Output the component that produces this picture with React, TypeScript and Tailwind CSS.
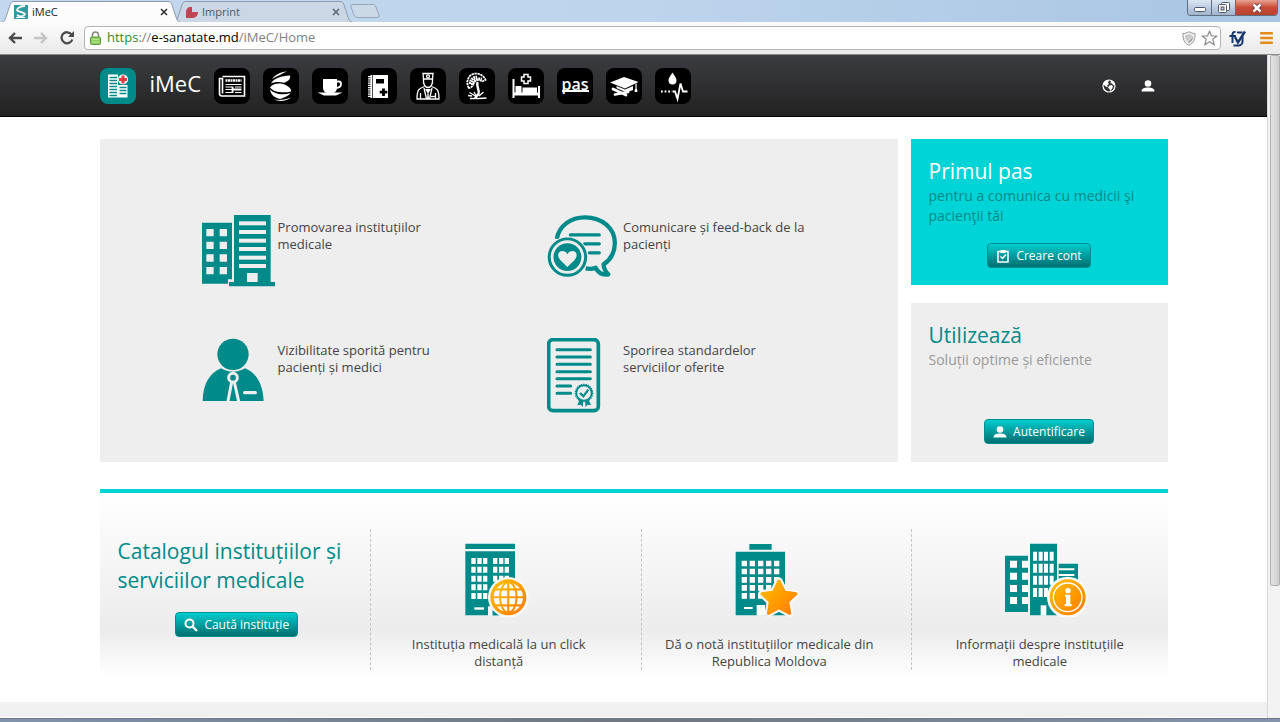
import React from "react";
import clsx from "clsx";

interface IconProps {
  className?: string;
}

/* ---------- browser window ---------- */

const TabEdge: React.FC<{ side: "left" | "right"; active: boolean }> = ({ side, active }) => (
  <svg
    viewBox="0 0 12 21"
    className={clsx("h-[21px] w-3 shrink-0", side === "right" && "-scale-x-100")}
    aria-hidden="true"
  >
    <path d="M0 21C3 20 3 19 4 16L8 4C9 1 10 .5 12 .5V21Z" fill={active ? "#fcfcfd" : "#ccd7e5"} />
    <path d="M0 21C3 20 3 19 4 16L8 4C9 1 10 .5 12 .5" fill="none" stroke="#8f9cad" />
  </svg>
);

interface TabProps {
  title: string;
  active?: boolean;
  icon: React.ReactNode;
}

const BrowserTab: React.FC<TabProps> = ({ title, active = false, icon }) => (
  <div className={clsx("flex items-end", active ? "z-10" : "-ml-1.5")}>
    <TabEdge side="left" active={active} />
    <div
      className={clsx(
        "flex h-[21px] w-[154px] items-center border-t border-[#8f9cad] text-[11px]",
        active ? "bg-[#fcfcfd] text-[#222]" : "bg-[#ccd7e5] text-[#4d5766]",
      )}
    >
      {icon}
      <span className="ml-1 flex-1">{title}</span>
      <button type="button" aria-label={`Close ${title}`}>
        <svg viewBox="0 0 8 8" className="h-2 w-2" stroke={active ? "#333" : "#5d6673"} strokeWidth="1.6">
          <path d="M1 1L7 7M7 1L1 7" />
        </svg>
      </button>
    </div>
    <TabEdge side="right" active={active} />
  </div>
);

const WindowControls = () => (
  <div className="mr-0.5 ml-auto flex h-4 self-start overflow-hidden rounded-b border border-t-0 border-[#5f6e80]">
    <button
      type="button"
      aria-label="Minimize"
      className="flex w-6 items-center justify-center border-r border-[#5f6e80] bg-linear-to-b from-[#dbe6f2] to-[#9fb4cb]"
    >
      <svg viewBox="0 0 12 10" className="h-2.5 w-3">
        <rect x=".5" y="4.5" width="11" height="4" rx="1" fill="#fff" stroke="#4d5868" />
      </svg>
    </button>
    <button
      type="button"
      aria-label="Restore"
      className="flex w-6 items-center justify-center border-r border-[#5f6e80] bg-linear-to-b from-[#dbe6f2] to-[#9fb4cb]"
    >
      <svg viewBox="0 0 12 12" className="h-3 w-3" fill="#fff" stroke="#4d5868">
        <rect x="3.5" y=".5" width="8" height="8" rx="1" />
        <rect x=".5" y="2.5" width="8" height="8" rx="1" />
        <rect x="3" y="5" width="3" height="3" fill="#b9c9da" />
      </svg>
    </button>
    <button
      type="button"
      aria-label="Close window"
      className="flex w-[41px] items-center justify-center bg-linear-to-b from-[#e5a294] via-[#c94a35] to-[#b5432f]"
    >
      <svg viewBox="0 0 12 10" className="h-2.5 w-3" fill="none">
        <path d="M2.5 1.5L9.5 8.5M9.5 1.5L2.5 8.5" stroke="#5c3a3a" strokeWidth="4.4" />
        <path d="M2.5 1.5L9.5 8.5M9.5 1.5L2.5 8.5" stroke="#fff" strokeWidth="2.6" />
      </svg>
    </button>
  </div>
);

const TabStrip = () => (
  <div className="flex h-[22px] items-end bg-linear-to-r from-[#c3d8ee] via-[#bdd4ec] to-[#a9c5e3] pl-0.5">
    <BrowserTab
      title="iMeC"
      active
      icon={
        <svg viewBox="0 0 14 14" className="h-3.5 w-3.5">
          <rect width="14" height="14" fill="#2f9aa0" />
          <path d="M11 1C7 1 3 3 3 5s6 1 8 4c-1 3-5 3-8 1" fill="none" stroke="#fff" strokeWidth="1.8" />
          <path d="M2 12.5h9" stroke="#fff" />
        </svg>
      }
    />
    <BrowserTab
      title="Imprint"
      icon={
        <svg viewBox="0 0 12 12" className="h-3 w-3" fill="#c04551">
          <path d="M4 1h2v5h6c0 4-3 6-6 6H0V6C0 3 2 1 4 1Z" />
        </svg>
      }
    />
    <button type="button" aria-label="New tab" className="mb-1 -ml-0.5">
      <svg viewBox="0 0 30 14" className="h-3.5 w-[30px]">
        <path
          d="M2 .5H22C24 .5 25 1 26 3L29 11C29.5 13 29 13.5 27 13.5H8C6 13.5 5 13 4 11L1 3C.5 1 1 .5 2 .5Z"
          fill="#cbd8e6"
          stroke="#98a7b9"
        />
      </svg>
    </button>
    <WindowControls />
  </div>
);

const Toolbar = () => (
  <div className="flex h-[33px] items-center border-b border-[#8a8a8a] bg-linear-to-b from-[#fcfcfd] to-[#e9e9ea] pr-[7px] pl-2">
    <button type="button" aria-label="Back">
      <svg viewBox="0 0 14 12" className="h-3 w-3.5" fill="none" stroke="#4a4a4a" strokeWidth="2.4">
        <path d="M14 6H2M7 1L2 6L7 11" />
      </svg>
    </button>
    <button type="button" aria-label="Forward" className="ml-3">
      <svg viewBox="0 0 14 12" className="h-3 w-3.5" fill="none" stroke="#c4c4c4" strokeWidth="2.4">
        <path d="M0 6H12M7 1L12 6L7 11" />
      </svg>
    </button>
    <button type="button" aria-label="Reload" className="ml-3">
      <svg viewBox="0 0 14 14" className="h-3.5 w-3.5">
        <path d="M11.5 3.5A5.5 5.5 0 1 0 12.300 8.500" fill="none" stroke="#4a4a4a" strokeWidth="2.3" />
        <path d="M14 0V6H8Z" fill="#4a4a4a" />
      </svg>
    </button>

    <div className="ml-2.5 flex h-6 flex-1 items-center rounded-sm border border-[#b4b4b4] bg-white pr-0.5 pl-[5px]">
      <svg viewBox="0 0 11 14" className="h-3.5 w-[11px] shrink-0">
        <path d="M2.5 7V4a3 3 0 0 1 6 0V7" fill="none" stroke="#888" strokeWidth="1.6" />
        <rect x=".5" y="6" width="10" height="7.5" rx="1" fill="#8fcf5f" stroke="#5f9a3f" />
        <path d="M2 8.5h7M2 11h7" stroke="#b5e493" />
      </svg>
      <div role="textbox" aria-label="Address" tabIndex={0} className="ml-1.5 flex-1 text-[13px] text-[#808080]">
        <span className="text-[#2a8f2a]">https</span>://
        <span className="text-black">e-sanatate.md</span>/iMeC/Home
      </div>
      <svg viewBox="0 0 14 15" className="h-[15px] w-3.5">
        <path d="M7 .7C5 2 3 2.5 1 2.5C.8 8 2 12 7 14.300C12 12 13.200 8 13 2.5C11 2.5 9 2 7 .7Z" fill="#f3f3f3" stroke="#969696" />
        <path d="M7 3C6 3.600 4.500 4.200 3 4.300C3 7 3.500 9 5 10.500L11 4.300C9.500 4.200 8 3.600 7 3Z" fill="#c8c8c8" />
        <path d="M5.500 11L11.200 5C11 8.500 10 11 7 12.300Z" fill="#aaa" />
      </svg>
      <button type="button" aria-label="Bookmark" className="ml-[5px]">
        <svg viewBox="0 0 17 16" className="h-4 w-[17px]">
          <path
            d="M8.5 1L10.5 6H16L11.700 9.300L13.300 15L8.500 11.700L3.700 15L5.300 9.300L1 6H6.500Z"
            fill="#fdfdfd"
            stroke="#8d8d8d"
            strokeWidth="1.2"
            strokeLinejoin="round"
          />
        </svg>
      </button>
    </div>

    <button type="button" aria-label="Extension" className="ml-2">
      <svg viewBox="0 0 17 17" className="h-[17px] w-[17px]" fill="none" stroke="#17376f" strokeWidth="2">
        <path d="M6.5 2C4 1.5 3.5 3 3.5 5V13M.5 6H7" />
        <path d="M6 7L9 12.500L16 1.500" strokeWidth="2.4" />
        <path d="M8 2.500H13.500M13.500 6V12C13.500 15 11 16 4.500 15.500" />
      </svg>
    </button>
    <button type="button" aria-label="Menu" className="ml-3.5">
      <svg viewBox="0 0 13 12" className="h-3 w-[13px]" fill="#e58a14">
        <rect width="13" height="2.6" rx="1" />
        <rect y="4.7" width="13" height="2.6" rx="1" />
        <rect y="9.4" width="13" height="2.6" rx="1" />
      </svg>
    </button>
  </div>
);

/* ---------- header icons, 36x36 tiles ---------- */

const Tile: React.FC<{ label: string; children: React.ReactNode }> = ({ label, children }) => (
  <a href="#" aria-label={label} className="flex h-9 w-9 items-center justify-center rounded-lg bg-black">
    {children}
  </a>
);

const NewsIcon = () => (
  <svg viewBox="0 0 36 36" fill="none" stroke="#fff">
    <path d="M8.5 8.5H30.5V28H8Q5.5 28 5.5 25.5V10.5H8.5V25.5" strokeWidth="1.6" />
    <path d="M11.5 12.5H27.5" strokeWidth="2.4" strokeDasharray="2 .5" />
    <path d="M11.5 16.5H27.5M11.5 19H18M11.5 21.5H18M11.5 24.5H18M21 19H27.5M21 24.5H27.5" strokeWidth="1.2" />
    <path d="M18.5 18.5V25M19 21.5H27.5" strokeWidth="1.8" />
  </svg>
);

const ShellIcon = () => (
  <svg viewBox="0 0 36 36" fill="#fff">
    <path d="M9 11C12 7 17 4 24 3.5C19 5.500 15 8 9 11Z" />
    <path d="M8 15.500C11 10 18 8 27 7.500C28 11 25 13.500 21 14.800C16 13.500 11 14 8 15.500Z" />
    <path d="M7 19.500C10 15 18 14.500 23.500 17.500C27 19.500 28.500 21.500 28 23.500C20 25.500 10 24 7 19.500Z" />
    <path d="M7 21.500C11 26 20 27.500 27.500 25C25 28.500 21 29.500 17 31C12 30 8 27 7 21.500Z" />
    <path d="M11 31.500C17 32.500 23 31.500 28 29.500C24 33 16 34 11 31.500Z" />
  </svg>
);

const CupIcon = () => (
  <svg viewBox="0 0 36 36">
    <path d="M11 11H25V19C25 23 23 25 20 25H16C13 25 11 23 11 19Z" fill="#fff" />
    <path d="M25 13.5H27Q29 13.5 29 16Q29 19.500 24.500 20" fill="none" stroke="#fff" strokeWidth="1.8" />
    <path d="M5.500 24.500H30.500L24 27.500H12Z" fill="#fff" />
  </svg>
);

const NotebookIcon = () => (
  <svg viewBox="0 0 36 36">
    <rect x="9.5" y="7" width="17.5" height="23" fill="#fff" />
    <path d="M8.5 8V29.5" stroke="#fff" strokeWidth="3" strokeDasharray="1.2 1" />
    <path d="M11.5 7V30" stroke="#000" strokeWidth=".7" />
    <rect x="15" y="11" width="8" height="4.5" />
    <path d="M22.5 20.5V28M18.7 24.2H26.3" stroke="#000" strokeWidth="2.8" />
  </svg>
);

const DoctorIcon = () => (
  <svg viewBox="0 0 36 36" fill="none" stroke="#fff" strokeWidth="1.3">
    <path d="M13 5.5H23L22.5 11H13.5Z" />
    <circle cx="18" cy="8.3" r="1.5" />
    <path d="M13.5 11C13 16 15 19.5 18 19.5S23 16 22.5 11" />
    <path d="M14.5 18.5C9 20.5 7 21.5 7 31H29C29 21.5 27 20.5 21.5 18.5" />
    <path d="M14 20L16.5 31M22 20L19.5 31M10.5 25V31M25.5 25V31" />
    <path d="M15 21H21L18.5 25L19 31H17L17.5 25Z" fill="#fff" stroke="none" />
    <path d="M21 28.5H25" />
  </svg>
);

const TreeIcon = () => (
  <svg viewBox="0 0 36 36" fill="none" stroke="#fff">
    <path d="M10 20C7 16 8 9 13 6.5C18 4 25 7 26.5 12L23 13.5C20 11 16 12 15 15C14 18 12 20 10 20Z" strokeWidth="1.8" strokeDasharray="2.4 .6" />
    <path d="M11 16C11 12 14 9 18 9M13 17C14 12 17 10 23 11" strokeWidth="2.6" strokeDasharray="1.8 .6" />
    <path d="M18.5 14C17 20 21 21 19.5 26L16 30" strokeWidth="2.4" />
    <path d="M10.5 24.5L18 29L15 24M20 28L24.5 24M11 30.5H20L27.5 30M13 28L9 27.5" strokeWidth="1.3" />
  </svg>
);

const BedIcon = () => (
  <svg viewBox="0 0 36 36">
    <path d="M5.5 11V30M31 18V30" stroke="#fff" strokeWidth="2" />
    <path d="M6 24.5H31V27.5H6Z" fill="#fff" />
    <path d="M7.500 18H13.500V26H7.500ZM14.500 19.500H29V26H14.500Z" fill="#fff" />
    <path d="M16 6.5H20V9H22.5V13H20V15.5H16V13H13.5V9H16Z" fill="#000" stroke="#fff" strokeWidth="1.5" />
  </svg>
);

const GraduateIcon = () => (
  <svg viewBox="0 0 36 36">
    <path d="M4 14.5L18 9L32.5 14L19 20.5Z" fill="#fff" />
    <path d="M10.5 18L19 21.5L27 18V22L19 25L10.5 21Z" fill="#fff" />
    <path d="M30 15.5V21" stroke="#fff" strokeWidth="1.2" />
    <path d="M29 21H31L31.5 24H28.5Z" fill="#fff" />
    <path d="M7 21L21 27" stroke="#000" strokeWidth="4.5" />
    <path d="M7 21L20 27M9 26.500L22 24" stroke="#fff" strokeWidth="2.8" strokeLinecap="round" />
  </svg>
);

const PulseIcon = () => (
  <svg viewBox="0 0 36 36">
    <path d="M17.5 4.5C20 8.5 21.5 10 21.5 12.5A4 4 0 0 1 13.5 12.5C13.5 10 15 8.5 17.5 4.5Z" fill="#fff" />
    <path d="M6 23.5H17" stroke="#fff" strokeWidth="1.8" strokeDasharray="1.8 1.8" />
    <path d="M17.5 23.5H20L22.5 31L25.5 15.5L28 23.5H32.5" fill="none" stroke="#fff" strokeWidth="1.8" />
  </svg>
);

const LogoIcon = () => (
  <svg viewBox="0 0 36 36">
    <rect x="8" y="6.5" width="10" height="23" fill="#fff" />
    <rect x="18" y="17" width="9.5" height="12.5" fill="#fff" />
    <path d="M9.5 9.5H17M9.5 12.5H17M9.5 15.5H17M9.5 18.5H17M9.5 21.5H17M9.5 24.5H17M9.5 27.500H17M19.500 19.5H26.500M19.500 22.5H26.500M19.500 25.5H26.500" stroke="#008a8a" strokeWidth="1.5" />
    <circle cx="23" cy="11.5" r="5" fill="#fff" />
    <path d="M23 7.5V15.5M19 11.5H27" stroke="#e23b3f" strokeWidth="3" />
  </svg>
);

const GlobeIcon: React.FC<IconProps> = ({ className }) => (
  <svg viewBox="0 0 14 14" className={className}>
    <circle cx="7" cy="7" r="6" fill="#333" stroke="#fff" strokeWidth="1.2" />
    <path d="M2 4C3 2 5 1 7 1.5L6 3.5L7 5L5 6.5L6 8L4.5 8L2 6Z" fill="#fff" />
    <path d="M7.5 6.5L10 6L11 8L8.5 12L7.5 10L6 8.5ZM9 1.5L12 4L12.5 7L10 4.5L8.5 4Z" fill="#fff" />
  </svg>
);

const UserIcon: React.FC<IconProps> = ({ className }) => (
  <svg viewBox="0 0 14 12" className={className} fill="currentColor">
    <circle cx="7" cy="3.5" r="3.3" />
    <path d="M.5 11.5C.5 8.5 3 7.5 7 7.5S13.500 8.500 13.500 11.500Z" />
  </svg>
);

const navItems = [
  { label: "Știri", icon: <NewsIcon /> },
  { label: "Sănătate", icon: <ShellIcon /> },
  { label: "Pauză", icon: <CupIcon /> },
  { label: "Agendă", icon: <NotebookIcon /> },
  { label: "Medici", icon: <DoctorIcon /> },
  { label: "Natură", icon: <TreeIcon /> },
  { label: "Spital", icon: <BedIcon /> },
  { label: "pas", icon: <span className="border-b-2 border-white text-base leading-[11px] font-semibold text-white">pas</span> },
  { label: "Educație", icon: <GraduateIcon /> },
  { label: "Donare", icon: <PulseIcon /> },
];

const Header = () => (
  <header className="border-b border-black bg-linear-to-b from-[#3c3d40] to-[#222]">
    <div className="mx-auto flex h-[61px] max-w-[1068px] items-center">
      <a href="#" className="flex items-center gap-3.5 text-white">
        <span className="h-9 w-9 rounded-lg bg-[#008a8a]">
          <LogoIcon />
        </span>
        <span className="pb-1 text-[22px]">iMeC</span>
      </a>
      <nav className="ml-[13px] flex gap-[13px]">
        {navItems.map((item) => (
          <Tile key={item.label} label={item.label}>
            {item.icon}
          </Tile>
        ))}
      </nav>
      <div className="mr-[13px] ml-auto flex items-center gap-[25px] text-white">
        <button type="button" aria-label="Limba">
          <GlobeIcon className="h-3.5 w-3.5" />
        </button>
        <button type="button" aria-label="Cont">
          <UserIcon className="h-3 w-3.5" />
        </button>
      </div>
    </div>
  </header>
);

/* ---------- illustrations ---------- */

const BuildingsArt = () => (
  <svg viewBox="36 30 222 216" className="h-[72px] w-[74px]" fill="#008a8a">
    <path d="M36 53H126V223H114V236H36Z" />
    <path d="M132 30H242V231H255V244H117V231H132Z" />
    <g fill="#eee">
      {[72, 110, 148, 186].map((y) => (
        <path key={y} d={`M49 ${y}h22v22h-22zM89 ${y}h22v22h-22z`} />
      ))}
      {[49, 75, 101, 126, 152, 177].map((y) => (
        <rect key={y} x="147" y={y} width="81" height="12" />
      ))}
      <rect x="171" y="204" width="32" height="27" />
    </g>
  </svg>
);

const FeedbackArt = () => (
  <svg viewBox="34 28 222 190" className="h-[63px] w-[74px]" fill="none" stroke="#008a8a">
    <path
      d="M63 100C70 60 105 35 148 35C200 35 238 68 238 112C238 140 225 163 204 177C205 190 211 200 218 207C203 209 188 203 180 187C170 191 160 191 150 189"
      strokeWidth="13"
      strokeLinejoin="round"
    />
    <path d="M104 88H191M147 115H191M161 142H191" strokeWidth="10" strokeLinecap="round" />
    <circle cx="95" cy="155" r="62" fill="#eee" stroke="none" />
    <circle cx="95" cy="155" r="55" strokeWidth="9" />
    <circle cx="95" cy="155" r="42" fill="#008a8a" stroke="none" />
    <path d="M95 185C80 170 67 162 67 149C67 134 88 132 95 146C102 132 123 134 123 149C123 162 110 170 95 185Z" fill="#eee" stroke="none" />
  </svg>
);

const SpecialistArt = () => (
  <svg viewBox="36 398 222 192" className="h-16 w-[74px]" fill="#008a8a">
    <path d="M38 587C39 535 60 502 93 489C115 503 143 503 165 489C198 502 219 535 221 587Z" />
    <circle cx="129" cy="447" r="47" />
    <g fill="none" stroke="#eee">
      <circle cx="129" cy="517" r="13" strokeWidth="9" />
      <path d="M125 530L114 588M133 530L146 588" strokeWidth="9" />
      <path d="M164 562H196" strokeWidth="10" strokeLinecap="round" />
    </g>
  </svg>
);

const CertificateArt = () => (
  <svg viewBox="36 398 222 225" className="h-[75px] w-[74px]" fill="none" stroke="#008a8a">
    <rect x="41" y="403" width="149" height="213" rx="13" strokeWidth="11" />
    <path
      d="M66 433H166M66 455H166M66 477H166M66 499H166M66 520H166M66 542H107M66 564H107"
      strokeWidth="9"
      strokeLinecap="round"
    />
    <path d="M133 584L127 600L137 598L144 605V588ZM161 584L168 600L158 598L151 605V588Z" fill="#008a8a" stroke="none" />
    <circle cx="147" cy="563" r="23" strokeWidth="5" />
    <circle cx="147" cy="563" r="26" strokeWidth="4" strokeDasharray="4 3" />
    <path d="M135 563L145 573L160 553" strokeWidth="7" />
  </svg>
);

const OrangeGradient: React.FC<{ id: string }> = ({ id }) => (
  <linearGradient id={id} x1="0" y1="0" x2="1" y2="1">
    <stop offset="0" stopColor="#ffc000" />
    <stop offset="1" stopColor="#ff7a00" />
  </linearGradient>
);

const CatalogGlobeArt = () => (
  <svg viewBox="222 188 204 222" className="h-[74px] w-[68px]">
    <OrangeGradient id="globe" />
    <path d="M223 190H372V206H223ZM223 213H372V405H223Z" fill="#008a8a" />
    <g fill="#fff">
      {[233, 259, 286, 312, 338].map((y) => (
        <path key={y} d={`M241 ${y}h13v18h-13zM259 ${y}h13v18h-13zM276 ${y}h13v18h-13zM306 ${y}h13v18h-13zM324 ${y}h13v18h-13zM341 ${y}h13v18h-13z`} />
      ))}
      <rect x="250" y="381" width="29" height="7" />
      <rect x="291" y="378" width="14" height="28" />
    </g>
    <circle cx="352" cy="351" r="61" fill="#fafafa" />
    <path d="M305 390L322 405H305Z" fill="#008a8a" />
    <circle cx="352" cy="351" r="54" fill="url(#globe)" />
    <circle cx="352" cy="351" r="44" fill="#fff" />
    <g fill="none" stroke="url(#globe)" strokeWidth="6">
      <path d="M308 350.5H396V351H308ZM351.5 306H352V396H351.5ZM315 327H389V327.5H315ZM315 375H389V375.5H315Z" />
      <ellipse cx="352" cy="351" rx="25" ry="45" />
    </g>
  </svg>
);

const CatalogStarArt = () => (
  <svg viewBox="1030 188 204 222" className="h-[74px] w-[68px]">
    <OrangeGradient id="star" />
    <path d="M1073 191H1140V208H1073ZM1032 214H1180V405H1032Z" fill="#008a8a" />
    <g fill="#fff">
      {[241, 265, 290, 314, 338].map((y) => (
        <path key={y} d={`M1050 ${y}h16v17h-16zM1074 ${y}h16v17h-16zM1099 ${y}h16v17h-16zM1123 ${y}h16v17h-16zM1147 ${y}h16v17h-16z`} />
      ))}
      <rect x="1057" y="380" width="26" height="6" />
      <rect x="1095" y="374" width="25" height="32" />
    </g>
    <path
      d="M1162 302L1178 335L1213 340L1188 364L1194 399L1162 382L1130 399L1136 364L1111 340L1146 335Z"
      fill="#f7f7f7"
      stroke="#f7f7f7"
      strokeWidth="22"
      strokeLinejoin="round"
    />
    <path
      d="M1162 302L1178 335L1213 340L1188 364L1194 399L1162 382L1130 399L1136 364L1111 340L1146 335Z"
      fill="url(#star)"
      stroke="url(#star)"
      strokeWidth="9"
      strokeLinejoin="round"
    />
  </svg>
);

const CatalogInfoArt = () => (
  <svg viewBox="279 67 279 222" className="h-[74px] w-[93px]">
    <OrangeGradient id="info" />
    <path d="M315 105H384V274H315ZM390 69H471V284H390ZM476 129H534V240H476Z" fill="#008a8a" />
    <g fill="#fff">
      {[120, 156, 193, 229].map((y) => (
        <path key={y} d={`M330 ${y}h21v21h-21zM366 ${y}h18v21h-18z`} />
      ))}
      {[93, 129, 165, 202].map((y) => (
        <path key={y} d={`M399 ${y}h12v27h-12zM416 ${y}h12v27h-12zM432 ${y}h12v27h-12zM449 ${y}h12v27h-12z`} />
      ))}
      <path d="M476 143H523V149H476ZM476 160H523V166H476Z" />
      <rect x="422" y="254" width="17" height="31" />
    </g>
    <circle cx="503" cy="230" r="62" fill="#fafafa" />
    <circle cx="503" cy="230" r="54" fill="url(#info)" />
    <circle cx="503" cy="230" r="43" fill="none" stroke="#fff" strokeWidth="4" />
    <circle cx="504" cy="210" r="8" fill="#fff" />
    <path d="M495 222H511V250H515V257H494V250H498V229H495Z" fill="#fff" />
  </svg>
);

/* ---------- page ---------- */

const ActionButton: React.FC<{ icon: React.ReactNode; children: React.ReactNode }> = ({ icon, children }) => (
  <button
    type="button"
    className="flex h-[25px] items-center gap-1.5 rounded border border-[#008f90] bg-linear-to-b from-[#00cdcf] to-[#006f70] px-2 text-xs whitespace-nowrap text-white"
  >
    {icon}
    {children}
  </button>
);

const features = [
  { text: "Promovarea instituțiilor medicale", art: <BuildingsArt /> },
  { text: "Comunicare și feed-back de la pacienți", art: <FeedbackArt /> },
  { text: "Vizibilitate sporită pentru pacienți și medici", art: <SpecialistArt /> },
  { text: "Sporirea standardelor serviciilor oferite", art: <CertificateArt /> },
];

const catalog = [
  { text: "Instituția medicală la un click distanță", art: <CatalogGlobeArt /> },
  { text: "Dă o notă instituțiilor medicale din Republica Moldova", art: <CatalogStarArt /> },
  { text: "Informații despre instituțiile medicale", art: <CatalogInfoArt /> },
];

const Home = () => (
  <main className="mx-auto w-full max-w-[1068px] flex-1 pt-[22px]">
    <div className="flex gap-[13px]">
      <section className="grid flex-1 grid-cols-2 content-start gap-y-12 bg-[#eee] pt-[76px] pr-[5px] pb-[49px] pl-[102px] text-[13px] leading-[17px] text-[#444]">
        {features.map((feature) => (
          <div key={feature.text} className="flex min-h-[75px] items-start gap-0.5">
            {feature.art}
            <p className="w-[186px] pt-1">{feature.text}</p>
          </div>
        ))}
      </section>

      <aside className="flex w-[257px] flex-col gap-[18px]">
        <section className="flex flex-col bg-[#00d4d7] px-[18px] pt-[18px] pb-[17px]">
          <h2 className="text-[21px] leading-[29px] text-white">Primul pas</h2>
          <p className="text-sm leading-5 text-[#008a8a]">pentru a comunica cu medicii şi pacienţii tăi</p>
          <div className="mt-[17px] flex justify-center">
            <ActionButton
              icon={
                <svg viewBox="0 0 14 14" className="h-3.5 w-3.5" fill="none" stroke="#fff" strokeWidth="1.5">
                  <path d="M2 2.5H12V13H2ZM4.5 7.5L6.5 9.5L10 5.5" />
                  <path d="M4.5 1H9.5V4H4.5Z" fill="#fff" stroke="none" />
                </svg>
              }
            >
              Creare cont
            </ActionButton>
          </div>
        </section>
        <section className="flex flex-1 flex-col bg-[#eee] px-[18px] pt-[18px] pb-[18px]">
          <h2 className="text-[21px] leading-[29px] text-[#008a8a]">Utilizează</h2>
          <p className="text-sm leading-5 text-[#999]">Soluții optime și eficiente</p>
          <div className="mt-auto flex justify-center">
            <ActionButton icon={<UserIcon className="h-3 w-3.5" />}>Autentificare</ActionButton>
          </div>
        </section>
      </aside>
    </div>

    <section className="mt-[27px] grid grid-cols-4 gap-[14px] border-t-4 border-[#00d4d7] bg-linear-to-b from-white via-[#ececec] via-75% to-white pt-9 pb-[7px]">
      <div className="flex flex-col items-center pl-[18px]">
        <h2 className="mt-2 w-full text-[21px] leading-[29px] text-[#008a8a]">
          Catalogul instituțiilor și serviciilor medicale
        </h2>
        <div className="mt-[17px]">
          <ActionButton
            icon={
              <svg viewBox="0 0 14 14" className="h-3.5 w-3.5" fill="none" stroke="#fff" strokeWidth="2">
                <circle cx="5.5" cy="5.5" r="4" />
                <path d="M8.5 8.5L13 13" strokeWidth="2.4" />
              </svg>
            }
          >
            Caută instituție
          </ActionButton>
        </div>
      </div>
      {catalog.map((item) => (
        <div
          key={item.text}
          className="flex flex-col items-center border-l border-dashed border-[#c4c4c4] px-[18px] pt-3.5"
        >
          {item.art}
          <p className="mt-[19px] text-center text-[13px] leading-[17px] text-[#444]">{item.text}</p>
        </div>
      ))}
    </section>
  </main>
);

export default function App() {
  return (
    <div className="flex min-h-screen flex-col bg-white font-['Open_Sans','Noto_Sans',sans-serif]">
      <TabStrip />
      <Toolbar />
      <div className="flex flex-1">
        <div className="flex flex-1 flex-col">
          <Header />
          <Home />
          <footer className="h-4 border-b border-white bg-[#f0f0f0]" />
        </div>
        <div className="flex w-[13px] flex-col border-l border-[#d8d8d8] bg-[#f3f3f3] pl-0.5">
          <div className="h-[531px] rounded-xs border border-[#b0b0b0] bg-linear-to-r from-[#e4e4e4] to-[#cdcdcd]" />
        </div>
      </div>
      <div className="h-1 border-t border-[#6b7686] bg-linear-to-r from-[#7f93aa] via-[#6f7780] to-[#8495ab]" />
    </div>
  );
}
